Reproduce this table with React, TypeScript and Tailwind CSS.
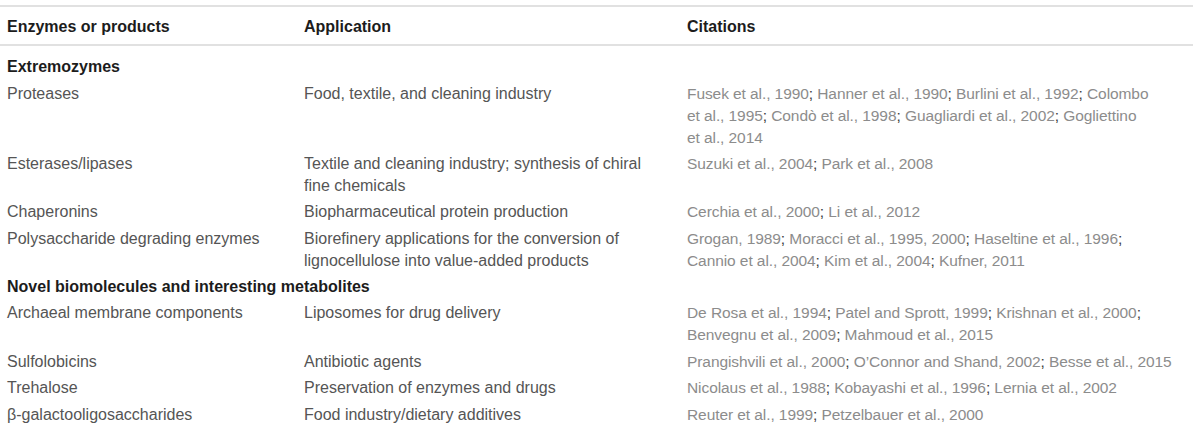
import React from 'react';

type Row =
  | { kind: 'section'; title: string }
  | { kind: 'item'; name: string; application: string[]; citations: string[] };

const rows: Row[] = [
  { kind: 'section', title: 'Extremozymes' },
  {
    kind: 'item',
    name: 'Proteases',
    application: ['Food, textile, and cleaning industry'],
    citations: [
      'Fusek et al., 1990; Hanner et al., 1990; Burlini et al., 1992; Colombo',
      'et al., 1995; Condò et al., 1998; Guagliardi et al., 2002; Gogliettino',
      'et al., 2014',
    ],
  },
  {
    kind: 'item',
    name: 'Esterases/lipases',
    application: ['Textile and cleaning industry; synthesis of chiral', 'fine chemicals'],
    citations: ['Suzuki et al., 2004; Park et al., 2008'],
  },
  {
    kind: 'item',
    name: 'Chaperonins',
    application: ['Biopharmaceutical protein production'],
    citations: ['Cerchia et al., 2000; Li et al., 2012'],
  },
  {
    kind: 'item',
    name: 'Polysaccharide degrading enzymes',
    application: [
      'Biorefinery applications for the conversion of',
      'lignocellulose into value-added products',
    ],
    citations: [
      'Grogan, 1989; Moracci et al., 1995, 2000; Haseltine et al., 1996;',
      'Cannio et al., 2004; Kim et al., 2004; Kufner, 2011',
    ],
  },
  { kind: 'section', title: 'Novel biomolecules and interesting metabolites' },
  {
    kind: 'item',
    name: 'Archaeal membrane components',
    application: ['Liposomes for drug delivery'],
    citations: [
      'De Rosa et al., 1994; Patel and Sprott, 1999; Krishnan et al., 2000;',
      'Benvegnu et al., 2009; Mahmoud et al., 2015',
    ],
  },
  {
    kind: 'item',
    name: 'Sulfolobicins',
    application: ['Antibiotic agents'],
    citations: ['Prangishvili et al., 2000; O’Connor and Shand, 2002; Besse et al., 2015'],
  },
  {
    kind: 'item',
    name: 'Trehalose',
    application: ['Preservation of enzymes and drugs'],
    citations: ['Nicolaus et al., 1988; Kobayashi et al., 1996; Lernia et al., 2002'],
  },
  {
    kind: 'item',
    name: 'β-galactooligosaccharides',
    application: ['Food industry/dietary additives'],
    citations: ['Reuter et al., 1999; Petzelbauer et al., 2000'],
  },
];

// semicolons are printed darker than the rest of the citation text
const CitationLine: React.FC<{ text: string }> = ({ text }) => {
  const parts = text.split(';');
  return (
    <div className="whitespace-nowrap">
      {parts.map((p, i) => (
        <React.Fragment key={i}>
          {p}
          {i < parts.length - 1 && <span className="text-[#3a3a3a]">;</span>}
        </React.Fragment>
      ))}
    </div>
  );
};

export default function App() {
  return (
    <div
      className="w-[1200px] h-[433px] bg-white pt-[5px] text-[16px] leading-[22px]"
      style={{ fontFamily: '"Liberation Sans", Arial, sans-serif' }}
    >
      <div className="w-[1193px]">
        <div className="grid grid-cols-[297px_383px_1fr] h-[41px] items-center border-y-2 border-[#e1e1e1] font-bold text-[#1c1c1c] pt-[2px]">
          <div className="pl-[7px]">Enzymes or products</div>
          <div className="pl-[7px]">Application</div>
          <div className="pl-[7px]">Citations</div>
        </div>

        <div className="pt-[8px]">
          {rows.map((row, i) =>
            row.kind === 'section' ? (
              <div key={i} className="py-[2.2px] pl-[7px] font-bold text-[#1c1c1c]">
                {row.title}
              </div>
            ) : (
              <div key={i} className="grid grid-cols-[297px_383px_1fr] py-[2.2px]">
                <div className="pl-[7px] text-[#555555] whitespace-nowrap">{row.name}</div>
                <div className="pl-[7px] text-[#555555]">
                  {row.application.map((line, j) => (
                    <div key={j} className="whitespace-nowrap">
                      {line}
                    </div>
                  ))}
                </div>
                <div className="pl-[7px] text-[#8c8c8c] text-[15.5px] tracking-[-0.08px]">
                  {row.citations.map((line, j) => (
                    <CitationLine key={j} text={line} />
                  ))}
                </div>
              </div>
            )
          )}
        </div>
      </div>
    </div>
  );
}
